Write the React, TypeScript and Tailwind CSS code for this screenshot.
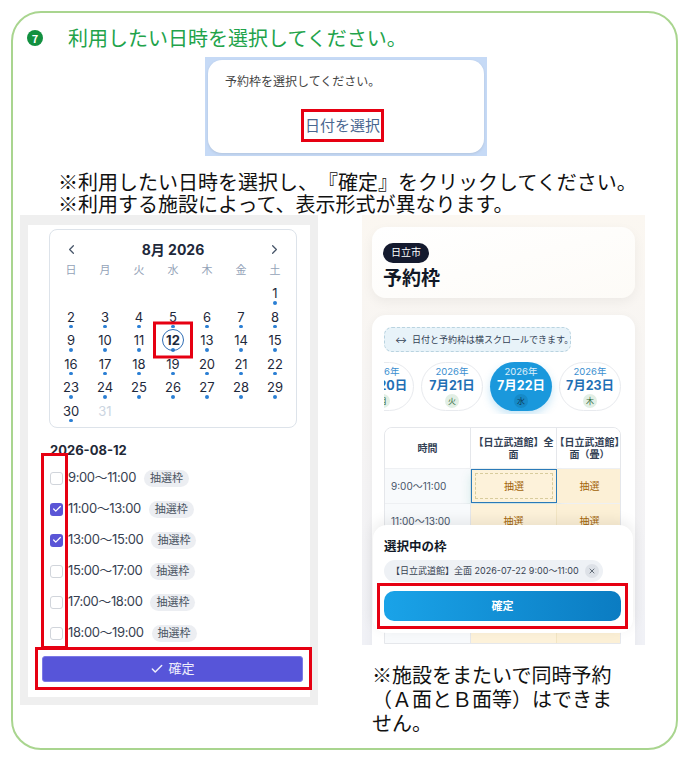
import { ChevronLeft, ChevronRight, Check, X } from 'lucide-react'

const ui = "font-['Inter','Noto_Sans_CJK_JP',sans-serif]"

const weekdays = ['日', '月', '火', '水', '木', '金', '土']

// August 2026 starts on a Saturday
const cells: (number | null)[] = [null, null, null, null, null, null, ...Array.from({ length: 31 }, (_, i) => i + 1)]

const slots = [
  { time: '9:00〜11:00', checked: false },
  { time: '11:00〜13:00', checked: true },
  { time: '13:00〜15:00', checked: true },
  { time: '15:00〜17:00', checked: false },
  { time: '17:00〜18:00', checked: false },
  { time: '18:00〜19:00', checked: false },
]

const dates = [
  { day: '7月20日', wd: '月', selected: false },
  { day: '7月21日', wd: '火', selected: false },
  { day: '7月22日', wd: '水', selected: true },
  { day: '7月23日', wd: '木', selected: false },
]

function CalendarShot() {
  return (
    <div className={`relative w-[298px] h-[490px] shrink-0 bg-[#efefef] pt-[10px] pb-[8px] px-[8px] ${ui}`}>
      <div className="h-full bg-white pt-[4px] pl-[21px] pr-[13px]">
        <div className="border border-[#dde3ea] rounded-[8px] pt-[10px] px-[4px]">
          <div className="h-[18px] flex items-center justify-between px-[10px] text-[#475569]">
            <ChevronLeft size={15} strokeWidth={2} />
            <span className="text-[14px] font-bold text-[#1e293b]">8月 2026</span>
            <ChevronRight size={15} strokeWidth={2} />
          </div>
          <div className="grid grid-cols-7 mt-[4px] h-[16px] items-center">
            {weekdays.map((w) => (
              <span key={w} className="text-center text-[11px] text-[#94a3b8]">{w}</span>
            ))}
          </div>
          <div className="grid grid-cols-7 mt-[8px]">
            {cells.map((d, i) => (
              <div key={i} className="relative h-[23.5px] flex flex-col items-center">
                {d !== null && (
                  <>
                    <span
                      className={`text-[13px] leading-[14px] ${
                        d === 31 ? 'text-[#cbd5e1]' : 'text-[#1e293b]'
                      } ${d === 12 ? 'font-bold text-[#1e3a5f]' : ''}`}
                    >
                      {d}
                    </span>
                    {d !== 31 && <span className="mt-[1px] w-[3.5px] h-[3.5px] rounded-full bg-[#2b7fd4]" />}
                    {d === 12 && (
                      <>
                        <span className="absolute left-1/2 top-[7px] -translate-x-1/2 -translate-y-1/2 w-[22px] h-[22px] rounded-full border-[1.5px] border-[#2f6db5]" />
                        <span className="absolute left-1/2 top-[7px] -translate-x-1/2 -translate-y-1/2 w-[40px] h-[37px] border-[3px] border-[#e60012]" />
                      </>
                    )}
                  </>
                )}
              </div>
            ))}
          </div>
        </div>

        <div className="mt-[14px] pl-[1px] text-[13px] leading-[16px] font-bold text-[#1f2937]">2026-08-12</div>

        <div className="mt-[4.5px] pl-[1px]">
          {slots.map((s) => (
            <div key={s.time} className="h-[31px] flex items-center">
              {s.checked ? (
                <span className="w-[13px] h-[13px] rounded-[3px] bg-[#5a55d6] flex items-center justify-center">
                  <Check size={10} strokeWidth={3} className="text-white" />
                </span>
              ) : (
                <span className="w-[13px] h-[13px] rounded-[3px] border border-[#d1d5db] bg-white" />
              )}
              <span className="ml-[5px] text-[13px] tracking-[-0.4px] text-[#374151]">{s.time}</span>
              <span className="ml-[8px] px-[6px] h-[17px] flex items-center rounded-full bg-[#eceef2] text-[11px] text-[#4b5563]">
                抽選枠
              </span>
            </div>
          ))}
        </div>

        <button className="mt-[7.5px] ml-[-7px] w-[261px] h-[26px] rounded-[3px] bg-[#5755d9] border border-[#7b79e6] flex items-center justify-center gap-[4px] text-white/90 text-[13px]">
          <Check size={14} strokeWidth={2.5} />
          確定
        </button>
      </div>

      <div className="absolute left-[21px] top-[238px] w-[27px] h-[196px] border-[3px] border-[#e60012]" />
      <div className="absolute left-[15px] top-[432px] w-[277px] h-[43px] border-[3px] border-[#e60012]" />
    </div>
  )
}

function SlotShot() {
  return (
    <div className={`relative w-[283px] h-[430px] overflow-hidden bg-gradient-to-b from-[#fbf7f1] to-[#f0f1f6] ${ui}`}>
      <div className="mt-[12px] mx-[10px] h-[71px] rounded-[14px] bg-gradient-to-br from-white to-[#fdfbf7] shadow-[0_4px_12px_rgba(0,0,0,0.05)] pt-[11px] pl-[11px]">
        <span className="inline-flex items-center h-[20px] px-[8px] rounded-full bg-[#141a2e] text-white text-[10px]">日立市</span>
        <div className="mt-[5px] text-[19px] leading-[22px] font-bold text-[#111827]">予約枠</div>
      </div>

      <div className="mt-[17px] mx-[10px] h-[400px] rounded-[14px] bg-white shadow-[0_2px_10px_rgba(0,0,0,0.05)] pt-[12px] px-[12px]">
        <div className="w-[187px] h-[25px] rounded-[8px] border border-dashed border-[#b9d3e0] bg-[#e8f3f9] flex items-center pl-[10px] gap-[5px] text-[9px] whitespace-nowrap text-[#334155]">
          <span>↔</span>
          日付と予約枠は横スクロールできます。
        </div>

        <div className="mt-[10px] h-[52px] overflow-hidden">
          <div className="ml-[-32px] flex gap-[7px]">
            {dates.map((d) => (
              <div
                key={d.day}
                className={`w-[62px] h-[49px] shrink-0 rounded-full flex flex-col items-center justify-center ${
                  d.selected
                    ? 'bg-[#1a98dc] shadow-[0_4px_8px_rgba(26,152,220,0.25)]'
                    : 'bg-white border border-[#e8eaee]'
                }`}
              >
                <span className={`text-[9.5px] leading-[12px] ${d.selected ? 'text-white/85' : 'text-[#3b8fd0]'}`}>2026年</span>
                <span className={`text-[12.5px] leading-[15px] font-bold ${d.selected ? 'text-white' : 'text-[#1f6fb5]'}`}>{d.day}</span>
                <span
                  className={`mt-[1px] w-[14px] h-[14px] rounded-full flex items-center justify-center text-[8px] ${
                    d.selected ? 'bg-[#168ac8] text-[#0c3d5c]' : 'bg-[#e2efe5] text-[#2f6b3a]'
                  }`}
                >
                  {d.wd}
                </span>
              </div>
            ))}
          </div>
        </div>

        <div className="mt-[13px] w-[237px] overflow-hidden rounded-t-[8px] border border-[#e5e7eb] text-[10px]">
          <div className="grid grid-cols-[86px_86px_65px] h-[40px] bg-white font-bold text-[#334155]">
            <div className="flex items-center justify-center border-r border-[#e5e7eb]">時間</div>
            <div className="flex items-center justify-center text-center leading-[12px] border-r border-[#e5e7eb] px-[2px]">【日立武道館】全面</div>
            <div className="flex items-center justify-center text-center leading-[12px] whitespace-nowrap overflow-hidden">【日立武道館】<br />面（畳）</div>
          </div>
          {[0, 1, 2, 3, 4].map((r) => (
            <div key={r} className="grid grid-cols-[86px_86px_65px] h-[35px] border-t border-[#eef0f3]">
              <div className="flex items-center pl-[6px] bg-[#f8fafc] text-[#475569] border-r border-[#e5e7eb]">
                {r === 0 ? '9:00〜11:00' : r === 1 ? '11:00〜13:00' : '13:00〜15:00'}
              </div>
              {r === 0 ? (
                <div className="bg-[#fdf2da] border-[1.5px] border-[#2a7ab8] p-[3px] shadow-[0_6px_10px_rgba(42,160,140,0.18)]">
                  <div className="h-full border border-dashed border-[#d8cc9c] flex items-center justify-center text-[#a16207]">抽選</div>
                </div>
              ) : (
                <div className="bg-[#fdf2da] flex items-center justify-center text-[#a16207] border-r border-[#f3e6c4]">抽選</div>
              )}
              <div className="bg-[#fcf0d6] flex items-center justify-center text-[#a16207]">抽選</div>
            </div>
          ))}
        </div>
      </div>

      <div className="absolute left-[11px] top-[310px] w-[260px] h-[108px] rounded-[14px] bg-white shadow-[0_-4px_14px_rgba(0,0,0,0.08)] pt-[13px] px-[11px]">
        <div className="text-[12.5px] leading-[18px] font-bold text-[#111827]">選択中の枠</div>
        <div className="mt-[4px] inline-flex items-center h-[22px] pl-[7px] pr-[4px] rounded-full bg-[#eef1f5] text-[9px] text-[#374151] gap-[6px] whitespace-nowrap">
          【日立武道館】全面 2026-07-22 9:00〜11:00
          <span className="w-[14px] h-[14px] rounded-full bg-[#dde1e7] flex items-center justify-center">
            <X size={8} strokeWidth={2.5} className="text-[#4b5563]" />
          </span>
        </div>
        <div className="mt-[9px] w-[237px] h-[30px] rounded-[10px] bg-gradient-to-r from-[#1aa3e8] to-[#0b7cc2] flex items-center justify-center text-white text-[11px] font-bold">
          確定
        </div>
      </div>
      <div className="absolute left-[15px] top-[368px] w-[251px] h-[46px] border-[3px] border-[#e60012]" />
    </div>
  )
}

export default function App() {
  return (
    <div className="w-[690px] h-[758px] bg-white pt-[11px] pl-[11px] font-['Noto_Sans_CJK_JP',sans-serif] [text-spacing-trim:space-all]">
      <div className="w-[667px] h-[739px] rounded-[30px] border-2 border-[#a9d58f]">
        <div className="pt-[13px] pl-[14px] h-[37px] flex items-center">
          <span className="w-[16px] h-[16px] shrink-0 rounded-full bg-[#129040] flex items-center justify-center text-white text-[11px] font-bold leading-none">
            7
          </span>
          <span className="ml-[25px] text-[20px] leading-[24px] text-[#22a34a]">利用したい日時を選択してください。</span>
        </div>

        <div className="mt-[7px] ml-[192px] w-[282px] h-[99px] bg-[#c6daf6] p-[3px]">
          <div className="h-full rounded-[14px] bg-white shadow-[0_1px_3px_rgba(0,0,0,0.1)] pt-[13px] pl-[17px] relative">
            <div className="text-[12px] leading-[16px] text-[#444]">予約枠を選択してください。</div>
            <div className="absolute left-[93px] top-[49px] w-[83px] h-[33px] border-[3px] border-[#e60012] flex items-center justify-center text-[15px] text-[#4a6790]">
              日付を選択
            </div>
          </div>
        </div>

        <div className="mt-[15px] pl-[45px] text-[20px] leading-[22px] text-[#111]">
          <div>※利用したい日時を選択し、『確定』をクリックしてください。</div>
          <div>※利用する施設によって、表示形式が異なります。</div>
        </div>

        <div className="flex pl-[7px] gap-[44px]">
          <CalendarShot />
          <div className="flex flex-col">
            <SlotShot />
            <div className="mt-[18px] ml-[10px] text-[20px] leading-[24px] text-[#111]">
              ※施設をまたいで同時予約
              <br />
              （Ａ面とＢ面等）はできま
              <br />
              せん。
            </div>
          </div>
        </div>
      </div>
    </div>
  )
}
